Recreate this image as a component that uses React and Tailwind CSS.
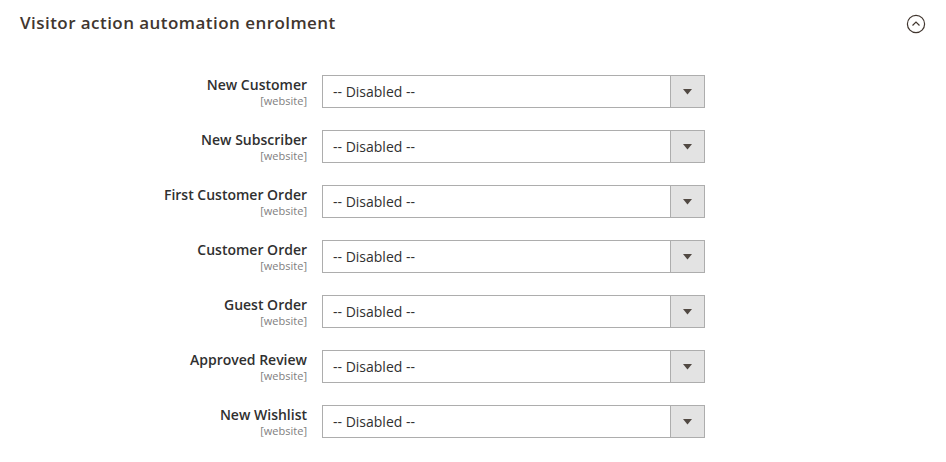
import React from "react";

const fields = [
  "New Customer",
  "New Subscriber",
  "First Customer Order",
  "Customer Order",
  "Guest Order",
  "Approved Review",
  "New Wishlist",
];

const SelectRow = ({ label }) => (
  <div className="flex items-start">
    <div className="w-[307px] pt-[1px] text-right">
      <div className="text-[14px] font-semibold leading-[18px] text-[#303030]">{label}</div>
      <div className="text-[11px] leading-[13px] text-[#808080]">[website]</div>
    </div>
    <div className="ml-[15px] flex h-[33px] w-[383px] border border-[#adadad] bg-white">
      <div className="flex flex-1 items-center pl-[10px] text-[14px] text-[#303030]">-- Disabled --</div>
      <div className="flex w-[34px] items-center justify-center border-l border-[#adadad] bg-[#e3e3e3]">
        <svg width="9" height="6" viewBox="0 0 9 6">
          <path d="M0 0 L9 0 L4.5 5.5 Z" fill="#514943" />
        </svg>
      </div>
    </div>
  </div>
);

export default function App() {
  return (
    <div className="h-[462px] w-[946px] bg-white font-['Open_Sans',sans-serif]">
      <div className="flex h-[45px] items-center justify-between pl-[20px] pr-[20px]">
        <h2 className="text-[17px] font-semibold tracking-[0.45px] text-[#41362f]">
          Visitor action automation enrolment
        </h2>
        <svg className="mt-[3px]" width="20" height="20" viewBox="0 0 20 20">
          <circle cx="10" cy="10" r="8.6" fill="none" stroke="#41362f" strokeWidth="1.2" />
          <path d="M6.5 11.5 L10 8 L13.5 11.5" fill="none" stroke="#41362f" strokeWidth="1.2" />
        </svg>
      </div>
      <div className="mt-[30px] flex flex-col gap-[22px]">
        {fields.map((f) => (
          <SelectRow key={f} label={f} />
        ))}
      </div>
    </div>
  );
}
